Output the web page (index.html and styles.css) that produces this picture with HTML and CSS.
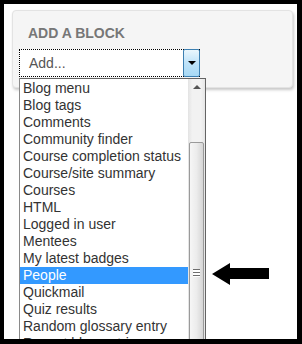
FILE: index.html
```html
<!DOCTYPE html>
<html lang="en">
<head>
  <meta charset="UTF-8" />
  <title>Add a block</title>
  <link rel="stylesheet" href="styles.css">
</head>
<body>
  <div class="frame">
    <div class="block">
      <h2 class="block-title">ADD A BLOCK</h2>
      <div class="select">
        <span class="select-value">Add...</span>
        <span class="select-button"><span class="caret"></span></span>

        <!-- Open dropdown list -->
        <div class="dropdown">
          <ul class="options">
            <li>Blog menu</li>
            <li>Blog tags</li>
            <li>Comments</li>
            <li>Community finder</li>
            <li>Course completion status</li>
            <li>Course/site summary</li>
            <li>Courses</li>
            <li>HTML</li>
            <li>Logged in user</li>
            <li>Mentees</li>
            <li>My latest badges</li>
            <li class="selected">People</li>
            <li>Quickmail</li>
            <li>Quiz results</li>
            <li>Random glossary entry</li>
            <li>Recent blog entries</li>
          </ul>
          <div class="scrollbar">
            <div class="scroll-up"><span class="up-caret"></span></div>
            <div class="scroll-track"></div>
            <div class="scroll-thumb">
              <span class="grip"></span>
            </div>
          </div>
        </div>
      </div>
    </div>

    <!-- Pointer arrow -->
    <svg class="pointer" width="66" height="30" viewBox="0 0 66 30">
      <polygon points="4,14 22,3 22,8 61,8 61,19 22,19 22,25" fill="#000" />
    </svg>
  </div>
</body>
</html>
```

FILE: styles.css
```css
* {
  margin: 0;
  padding: 0;
  box-sizing: border-box;
}

body {
  font-family: "Liberation Sans", Arial, sans-serif;
  background: #000;
}

/* Black frame around the screenshot */
.frame {
  position: relative;
  width: 302px;
  height: 344px;
  border: solid #000;
  border-width: 4px 5px 5px 4px;
  background: #fff;
  overflow: hidden;
  padding: 6px 4px 0 8px;
}

/* Block card */
.block {
  background: #f5f5f5;
  border: 1px solid #e3e3e3;
  border-radius: 4px;
  box-shadow: 1px 2px 3px rgba(0, 0, 0, 0.22);
  padding: 14px 6px 10px 6px;
}

.block-title {
  font-size: 14px;
  line-height: 16px;
  font-weight: bold;
  color: #777;
  padding-left: 9px;
  margin-bottom: 8px;
}

/* Select box with focus ring */
.select {
  position: relative;
  width: 181px;
  height: 28px;
  border: 1px dotted #000;
  background: #fff;
  display: flex;
}

.select-value {
  flex: 1;
  font-size: 14px;
  line-height: 26px;
  color: #555;
  padding-left: 9px;
}

.select-button {
  width: 17px;
  margin: -1px -1px -1px 0;
  border: 1px solid #3c7fb1;
  border-radius: 2px;
  background: linear-gradient(#eaf6fd, #bfe3f9 50%, #a7d9f5);
  display: flex;
  align-items: center;
  justify-content: center;
}

.caret {
  width: 0;
  height: 0;
  border-left: 4px solid transparent;
  border-right: 4px solid transparent;
  border-top: 4px solid #000;
}

/* Dropdown list */
.dropdown {
  position: absolute;
  top: 28px;
  left: -1px;
  width: 187px;
  height: 300px;
  border: 1px solid #646464;
  border-left-color: #8a8a8a;
  background: #fff;
  display: flex;
}

.options {
  list-style: none;
  width: 168px;
  padding-top: 1px;
}

.options li {
  font-size: 14px;
  line-height: 17px;
  height: 17px;
  color: #333;
  padding-left: 3px;
  white-space: nowrap;
}

.options li.selected {
  background: #3399ff;
  color: #fff;
}

/* Scrollbar */
.scrollbar {
  width: 17px;
  display: flex;
  flex-direction: column;
  background: linear-gradient(90deg, #e3e3e3, #f2f2f2 25%, #f2f2f2 75%, #e6e6e6);
}

.scroll-up {
  height: 17px;
  display: flex;
  align-items: center;
  justify-content: center;
}

.up-caret {
  width: 0;
  height: 0;
  border-left: 4px solid transparent;
  border-right: 4px solid transparent;
  border-bottom: 4px solid #555;
  margin-top: -1px;
}

.scroll-track {
  height: 46px;
}

.scroll-thumb {
  flex: 1;
  margin: 0 1px;
  border: 1px solid #9a9a9a;
  border-radius: 2px;
  background: linear-gradient(90deg, #f6f6f6, #ececec 50%, #d6d6d6);
  padding-top: 126px;
  display: flex;
  justify-content: center;
}

.grip {
  width: 7px;
  height: 8px;
  background: repeating-linear-gradient(#6e6e6e 0, #6e6e6e 1px, #ffffff 1px, #ffffff 3px);
}

/* Annotation arrow */
.pointer {
  position: absolute;
  left: 204px;
  top: 256px;
}
```
